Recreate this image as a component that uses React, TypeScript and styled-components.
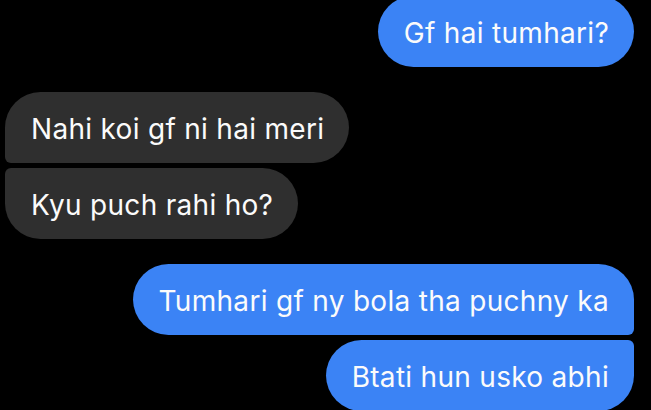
import styled, { createGlobalStyle } from 'styled-components'

const GlobalStyle = createGlobalStyle`
  html, body {
    margin: 0;
    padding: 0;
    background: #000;
  }
  body {
    width: 651px;
    height: 410px;
    overflow: hidden;
    font-family: Inter, "Noto Sans", "Liberation Sans", sans-serif;
  }
`

const Thread = styled.div`
  display: flex;
  flex-direction: column;
  gap: 25px;
  margin-top: -4px;
  padding: 0 17px 0 5px;
`

const Group = styled.div<{ $mine?: boolean }>`
  display: flex;
  flex-direction: column;
  align-items: ${(p) => (p.$mine ? 'flex-end' : 'flex-start')};
  gap: 5px;
`

type Position = 'single' | 'first' | 'last'

const radius = (mine: boolean, pos: Position) => {
  const big = '36px'
  const small = '6px'
  if (pos === 'single') return big
  const top = pos === 'first' ? big : small
  const bottom = pos === 'first' ? small : big
  return mine
    ? `${big} ${top} ${bottom} ${big}`
    : `${top} ${big} ${big} ${bottom}`
}

const Bubble = styled.div<{ $mine?: boolean; $pos: Position }>`
  box-sizing: border-box;
  height: 71px;
  padding: 21px 25px 17px 26px;
  border-radius: ${(p) => radius(!!p.$mine, p.$pos)};
  background: ${(p) => (p.$mine ? '#3b83f5' : '#2f2f2f')};
  color: #fbfbfb;
  font-size: 28px;
  line-height: 33px;
  white-space: nowrap;
  letter-spacing: 0.3px;
`

const App = () => {
  return (
    <>
      <GlobalStyle />
      <Thread>
        <Group $mine>
          <Bubble $mine $pos="single">Gf hai tumhari?</Bubble>
        </Group>
        <Group>
          <Bubble $pos="first">Nahi koi gf ni hai meri</Bubble>
          <Bubble $pos="last">Kyu puch rahi ho?</Bubble>
        </Group>
        <Group $mine>
          <Bubble $mine $pos="first">Tumhari gf ny bola tha puchny ka</Bubble>
          <Bubble $mine $pos="last">Btati hun usko abhi</Bubble>
        </Group>
      </Thread>
    </>
  )
}

export default App
